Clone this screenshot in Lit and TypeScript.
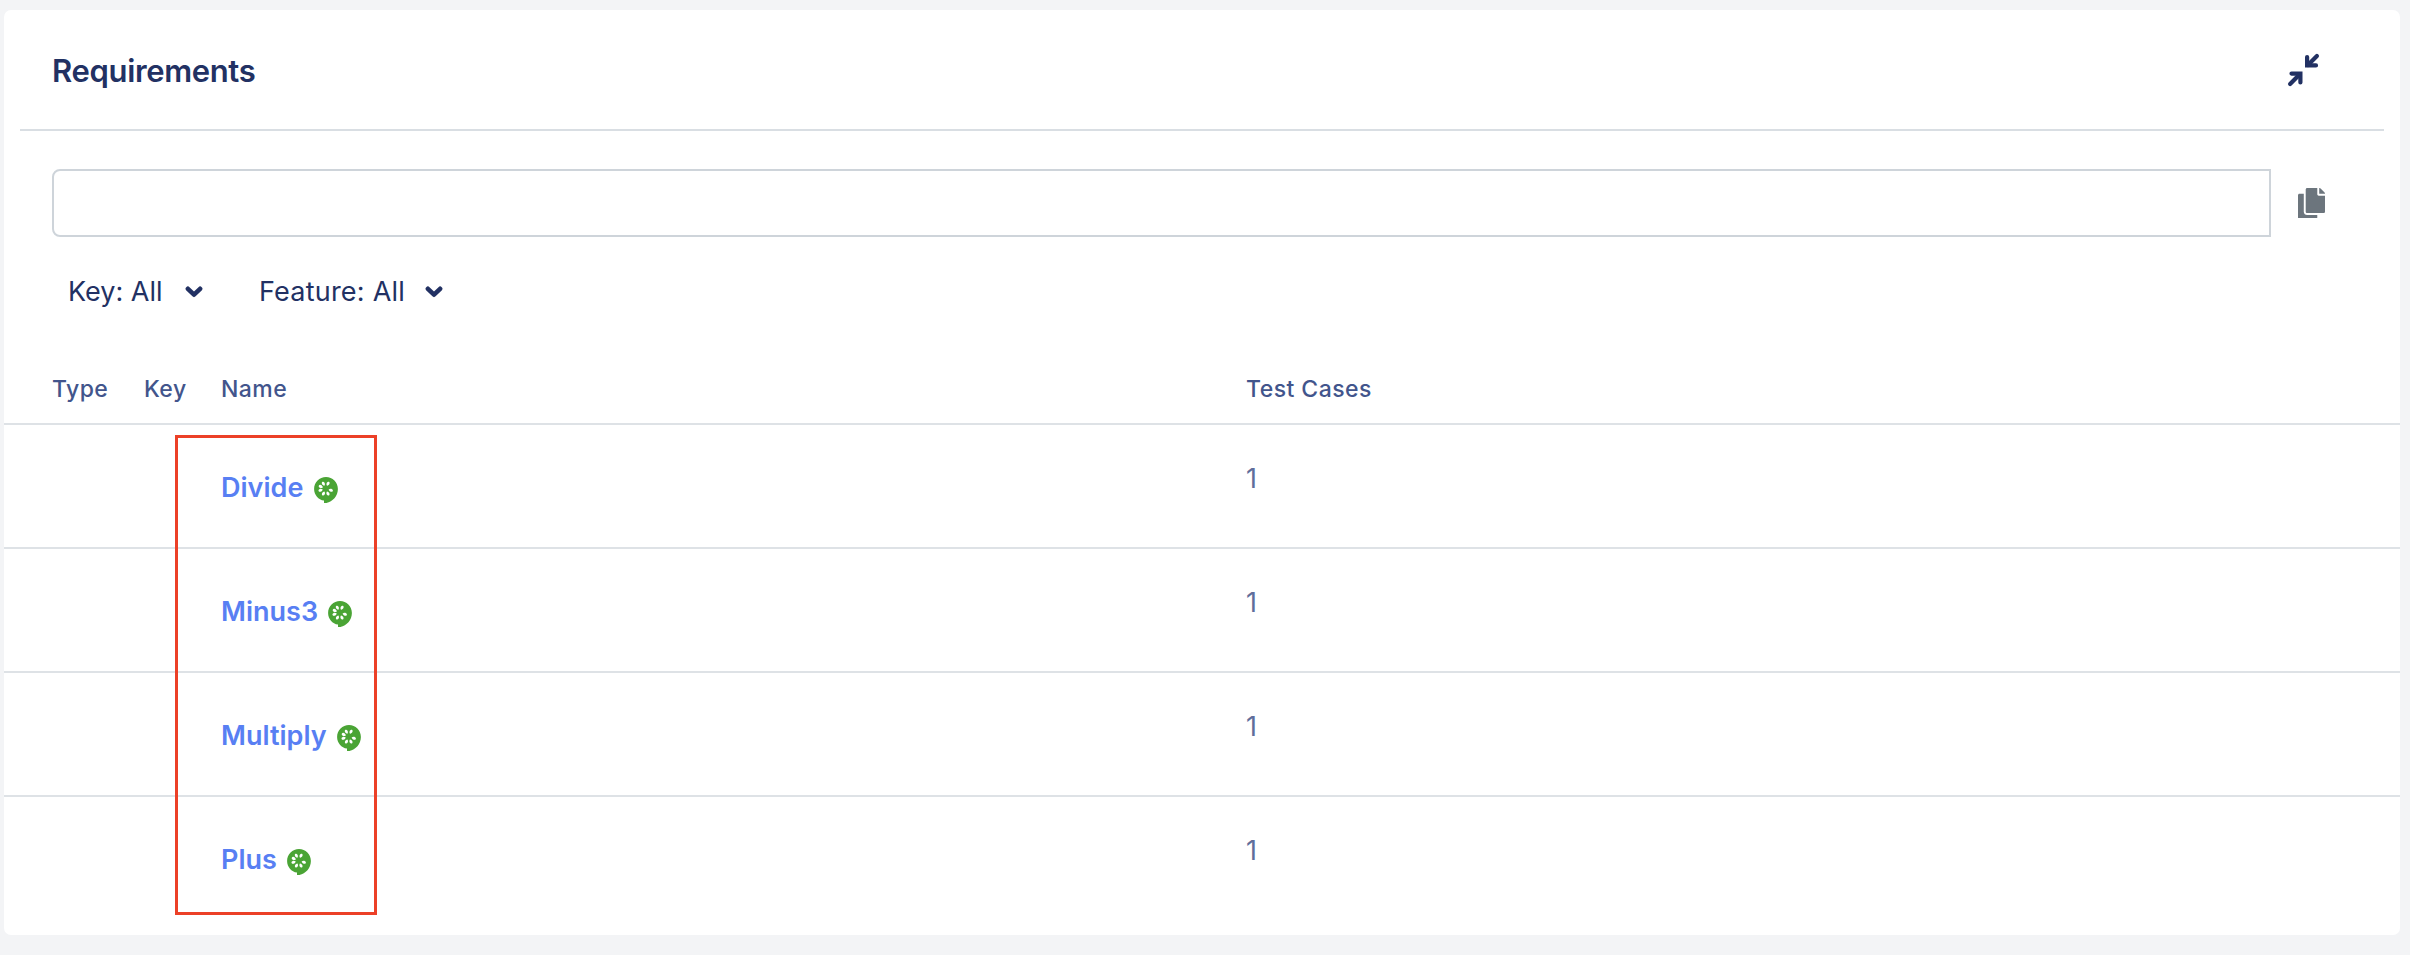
import { LitElement, html, css, svg } from "lit";
import { customElement, property } from "lit/decorators.js";

interface Requirement {
  name: string;
  testCases: number;
}

const requirements: Requirement[] = [
  { name: "Divide", testCases: 1 },
  { name: "Minus3", testCases: 1 },
  { name: "Multiply", testCases: 1 },
  { name: "Plus", testCases: 1 },
];

const seedAngles = [25, 108, 156, 204, 252, 293, 335];

const cucumberIcon = html`<svg class="cucumber" width="24" height="26.4" viewBox="0 0 24 26.4" aria-hidden="true">
  <path fill="#4aa435" d="M12 0C5.4 0 .1 5.3.1 11.9c0 5.9 4.3 10.8 9.9 11.7v2.8C17.2 25.9 23.9 19.9 23.9 11.9 23.9 5.3 18.6 0 12 0z"/>
  ${seedAngles.map(
    (a) => svg`<path fill="#fff" transform="rotate(${a} 11.7 11.6)" d="M11.7 8.5c-1-.7-1.6-1.700-1.450-2.800.15-1 .75-1.600 1.450-1.600s1.300.6 1.450 1.600c.1 1.100-.45 2.100-1.450 2.800z"/>`
  )}
</svg>`;

@customElement("filter-dropdown")
class FilterDropdown extends LitElement {
  @property() label = "";

  static styles = css`
    :host {
      display: flex;
      align-items: flex-start;
      justify-content: space-between;
      font-size: 27px;
      line-height: 33px;
      color: #223163;
      white-space: nowrap;
    }
    .chevron {
      display: block;
      margin-top: 10px;
    }
  `;

  render() {
    return html`
      <span>${this.label}</span>
      <svg class="chevron" width="18" height="14" viewBox="0 0 18 14" aria-hidden="true">
        <path d="M2.9 3.8 9 9.7l6.1-5.9" fill="none" stroke="#223163" stroke-width="4.6" stroke-linecap="round" stroke-linejoin="round"/>
      </svg>
    `;
  }
}

@customElement("app-root")
class AppRoot extends LitElement {
  static styles = css`
    :host {
      display: block;
      box-sizing: border-box;
      height: 955px;
      padding: 10px 10px 20px 4px;
      background: #f3f4f6;
      font-family: Inter, "Liberation Sans", sans-serif;
      overflow: hidden;
    }
    .card {
      position: relative;
      box-sizing: border-box;
      height: 925px;
      background: #fff;
      border-radius: 7px;
    }
    .header {
      display: flex;
      align-items: flex-start;
      justify-content: space-between;
      box-sizing: border-box;
      height: 121px;
      margin: 0 16px;
      padding: 42px 64px 0 32px;
      border-bottom: 2px solid #d9dee3;
    }
    h1 {
      margin: 0;
      font-size: 31px;
      line-height: 37px;
      font-weight: 600;
      letter-spacing: -0.34px;
      color: #223163;
    }
    .collapse {
      display: block;
      margin-top: 1px;
    }
    .search {
      display: flex;
      align-items: center;
      gap: 27px;
      padding: 38px 75px 0 48px;
    }
    .search-input {
      flex: 1;
      box-sizing: border-box;
      height: 68px;
      padding: 0 20px;
      border: 2px solid #ced4da;
      border-radius: 8px 0 0 8px;
      background: #fff;
      font: inherit;
      font-size: 27px;
      outline: none;
    }
    .copy {
      display: block;
    }
    .filters {
      display: flex;
      gap: 56px;
      padding: 38px 64px 0;
    }
    .key-filter {
      width: 135px;
    }
    .feature-filter {
      width: 184px;
      letter-spacing: 0.22px;
    }
    .row {
      display: grid;
      grid-template-columns: 92px 77px 1025px 1fr;
      box-sizing: border-box;
      height: 124px;
      padding-left: 48px;
      border-bottom: 2px solid #dee2e6;
      font-size: 27px;
      line-height: 33px;
    }
    .row:last-child {
      border-bottom: none;
    }
    .head {
      height: auto;
      margin-top: 67px;
      padding-bottom: 20px;
      font-size: 23px;
      line-height: 28px;
      font-weight: 500;
      letter-spacing: 0.45px;
      color: #42558c;
    }
    .name {
      display: flex;
      align-items: flex-start;
      gap: 10.3px;
      padding-top: 46px;
    }
    .link {
      color: #587ff3;
      font-weight: 600;
      letter-spacing: 0.02px;
      text-decoration: none;
    }
    .cucumber {
      display: block;
      margin-top: 5.7px;
    }
    .count {
      padding-top: 37px;
      color: #5f6e9b;
    }
    .highlight {
      position: absolute;
      left: 171px;
      top: 425px;
      box-sizing: border-box;
      width: 202px;
      height: 480px;
      border: 3px solid #ec4027;
      pointer-events: none;
    }
  `;

  render() {
    return html`
      <section class="card">
        <header class="header">
          <h1>Requirements</h1>
          <svg class="collapse" width="33" height="34" viewBox="0 0 33 34" aria-hidden="true">
            <g fill="none" stroke="#223163" stroke-width="4.2" stroke-linecap="round" stroke-linejoin="miter">
              <path d="M20.1 4.1V12.4h8.900"/>
              <path d="M21 12 29.900 3.100"/>
              <path d="M4.500 20.600H13.400v8.900"/>
              <path d="M12.500 21.500 3.100 30.900"/>
            </g>
          </svg>
        </header>

        <div class="search">
          <input class="search-input" type="text" aria-label="Search" />
          <svg class="copy" width="27" height="30.86" viewBox="0 0 448 512" fill="#6c757d" aria-hidden="true">
            <path d="M320 448v40c0 13.255-10.745 24-24 24H24c-13.255 0-24-10.745-24-24V120c0-13.255 10.745-24 24-24h72v296c0 30.879 25.121 56 56 56h168zm0-344V0H152c-13.255 0-24 10.745-24 24v368c0 13.255 10.745 24 24 24h272c13.255 0 24-10.745 24-24V128H344c-13.2 0-24-10.8-24-24zm120.971-31.029L375.029 7.029A24 24 0 0 0 358.059 0H352v96h96v-6.059a24 24 0 0 0-7.029-16.97z"/>
          </svg>
        </div>

        <div class="filters">
          <filter-dropdown class="key-filter" label="Key: All"></filter-dropdown>
          <filter-dropdown class="feature-filter" label="Feature: All"></filter-dropdown>
        </div>

        <div class="table">
          <div class="row head">
            <div>Type</div>
            <div>Key</div>
            <div>Name</div>
            <div>Test Cases</div>
          </div>
          ${requirements.map(
            (r) => html`
              <div class="row">
                <div></div>
                <div></div>
                <div class="name"><a class="link">${r.name}</a>${cucumberIcon}</div>
                <div class="count">${r.testCases}</div>
              </div>
            `
          )}
        </div>
        <div class="highlight"></div>
      </section>
    `;
  }
}
